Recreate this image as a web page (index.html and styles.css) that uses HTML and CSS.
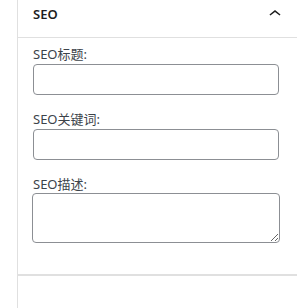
FILE: index.html
```html
<!DOCTYPE html>
<html lang="zh">
<head>
  <meta charset="utf-8">
  <meta name="viewport" content="width=device-width, initial-scale=1">
  <title>SEO</title>
  <link rel="stylesheet" href="styles.css">
</head>
<body>
  <div class="sidebar">
    <div class="panel">
      <div class="panel-header">
        <span class="panel-title">SEO</span>
        <svg class="panel-toggle" width="24" height="24" viewBox="0 0 24 24" aria-hidden="true">
          <path d="M6.5 12.4L12 8l5.5 4.4-.9 1.2L12 10l-4.6 3.6-1-1.2z"></path>
        </svg>
      </div>
      <div class="panel-body">
        <div class="field">
          <label class="field-label" for="seo-title">SEO标题:</label>
          <input class="field-input" id="seo-title" type="text">
        </div>
        <div class="field">
          <label class="field-label" for="seo-keywords">SEO关键词:</label>
          <input class="field-input" id="seo-keywords" type="text">
        </div>
        <div class="field">
          <label class="field-label" for="seo-description">SEO描述:</label>
          <textarea class="field-textarea" id="seo-description"></textarea>
        </div>
      </div>
    </div>
  </div>
</body>
</html>
```

FILE: styles.css
```css
*, *::before, *::after {
  margin: 0;
  padding: 0;
  box-sizing: border-box;
}

body {
  background-color: #FFFFFF;
  color: #1E1E1E;
  font-size: 13px;
  font-family: "Noto Sans", "Noto Sans CJK SC", sans-serif;
}

.sidebar {
  min-height: 308px;
  margin-left: 17px;
  border-left: 1px solid #E0E0E0;
}

.panel {
  border-bottom: 2px solid #E0E0E0;
}

.panel-header {
  display: flex;
  align-items: flex-start;
  justify-content: space-between;
  height: 38px;
  padding: 2px 10px 0 15px;
  border-bottom: 1px solid #E0E0E0;
}

.panel-title {
  font-weight: 600;
  line-height: 24px;
}

.panel-toggle {
  fill: #1E1E1E;
}

.panel-body {
  padding: 7px 18px 31px 15px;
}

.field + .field {
  margin-top: 15px;
}

.field-label {
  display: block;
  margin-bottom: 1px;
  color: #3C434A;
  line-height: 18px;
}

.field-input,
.field-textarea {
  display: block;
  width: 100%;
  border: 1px solid #8C8F94;
  border-radius: 4px;
  background-color: #FFFFFF;
  font-family: inherit;
  font-size: 13px;
}

.field-input {
  height: 31px;
}

.field-textarea {
  width: calc(100% + 2px);
  height: 50px;
  margin-top: -1px;
  margin-left: -1px;
}
```
